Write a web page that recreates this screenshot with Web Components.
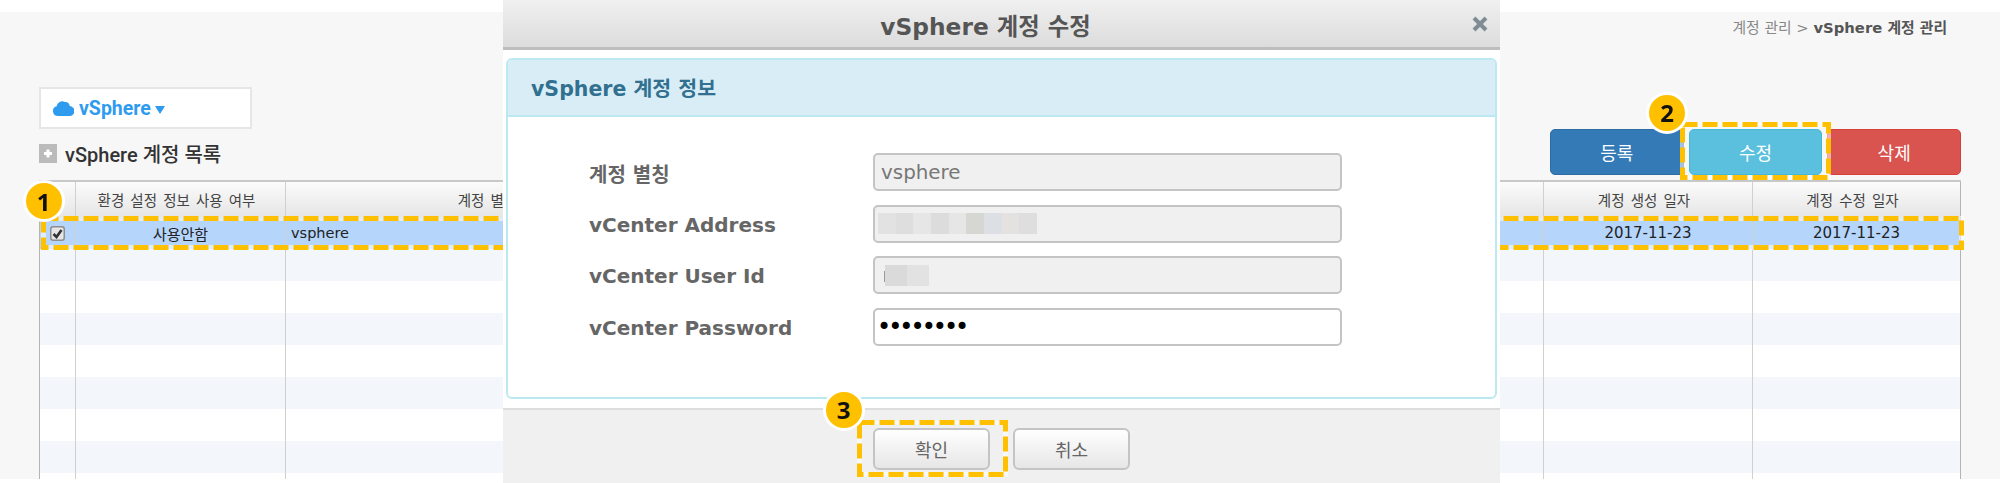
<!DOCTYPE html>
<html lang="ko">
<head>
    <meta charset="UTF-8">
    <title>vSphere 계정 관리</title>
    <style>
        html, body {
            margin: 0;
            height: 483px;
            overflow: hidden;
            background: #fff;
            font-family: "DejaVu Sans", "Noto Sans CJK KR", sans-serif;
        }
    </style>
</head>
<body>
    <account-page>
        <bread-crumb slot="crumb"><span>계정 관리 &gt; </span><b>vSphere 계정 관리</b></bread-crumb>
        <cloud-select slot="left">vSphere</cloud-select>
        <section-title slot="left">vSphere 계정 목록</section-title>
        <action-button slot="right" kind="primary">등록</action-button>
        <action-button slot="right" kind="info">수정</action-button>
        <action-button slot="right" kind="danger">삭제</action-button>
        <data-grid slot="table">
            <grid-row header>
                <grid-cell></grid-cell>
                <grid-cell>환경 설정 정보 사용 여부</grid-cell>
                <grid-cell style="padding-right:0">계정 별칭</grid-cell>
                <grid-cell></grid-cell>
                <grid-cell>계정 생성 일자</grid-cell>
                <grid-cell>계정 수정 일자</grid-cell>
            </grid-row>
            <grid-row selected>
                <grid-cell><check-mark></check-mark></grid-cell>
                <grid-cell>사용안함</grid-cell>
                <grid-cell align="left" style="font-size:14.5px">vsphere</grid-cell>
                <grid-cell></grid-cell>
                <grid-cell>2017-11-23</grid-cell>
                <grid-cell>2017-11-23</grid-cell>
            </grid-row>
        </data-grid>
    </account-page>

    <dash-box x="41" y="216" w="1923" h="34"></dash-box>

    <edit-dialog heading="vSphere 계정 수정">
        <info-panel heading="vSphere 계정 정보">
            <form-field label="계정 별칭" disabled>vsphere</form-field>
            <form-field label="vCenter Address" disabled><mask-blocks shades="#e2e2e2 #dedede #e6e6e6 #dcdcdc #e6e6e6 #d6d6d2 #dce0e4 #e4e2e0 #dedede" width="159"></mask-blocks></form-field>
            <form-field label="vCenter User Id" disabled><mask-blocks shades="#dadada #e2e2e2" width="44" pad="11"></mask-blocks></form-field>
            <form-field label="vCenter Password"><span style="font-size:24px;letter-spacing:-3px;margin-left:-4px;color:#000">••••••••</span></form-field>
        </info-panel>
        <plain-button slot="footer">확인</plain-button>
        <plain-button slot="footer">취소</plain-button>
    </edit-dialog>

    <dash-box x="1680" y="122" w="151" h="58"></dash-box>
    <dash-box x="857" y="420" w="151" h="57"></dash-box>
    <step-badge x="43.5" y="201">1</step-badge>
    <step-badge x="1667" y="112.5">2</step-badge>
    <step-badge x="843.5" y="409.5">3</step-badge>

    <script>
        // Helper so every component only has to give its markup.
        class ShadowEl extends HTMLElement {
            constructor() {
                super();
                this.attachShadow({ mode: 'open' });
            }
            connectedCallback() {
                this.shadowRoot.innerHTML = this.markup();
            }
        }

        class AccountPage extends ShadowEl {
            markup() {
                return `
                <style>
                    :host { display: block; margin-top: 12px; height: 467px; overflow: hidden; background: #f7f7f7; padding: 0 39px; box-sizing: border-box; }
                    .bar { display: flex; align-items: flex-end; justify-content: space-between; height: 163px; margin-bottom: 5px; }
                    .right { display: flex; gap: 5px; width: 411px; }
                    .crumb { height: 0; }
                </style>
                <div class="crumb"><slot name="crumb"></slot></div>
                <div class="bar">
                    <div class="left"><slot name="left"></slot></div>
                    <div class="right"><slot name="right"></slot></div>
                </div>
                <slot name="table"></slot>`;
            }
        }
        customElements.define('account-page', AccountPage);

        class BreadCrumb extends ShadowEl {
            markup() {
                return `
                <style>
                    :host { display: block; text-align: right; padding: 7px 14px 0 0; font-size: 14.8px; line-height: 18px; color: #888; }
                    ::slotted(b) { color: #555; }
                </style>
                <slot></slot>`;
            }
        }
        customElements.define('bread-crumb', BreadCrumb);

        class CloudSelect extends ShadowEl {
            markup() {
                return `
                <style>
                    :host { display: flex; align-items: center; box-sizing: border-box; width: 213px; height: 42px; background: #fff; border: 2px solid #e6e6e6; padding-left: 12px; margin-bottom: 13px;
                        font: bold 19.5px Roboto, "Noto Sans CJK KR", sans-serif; color: #2f9bef; }
                    svg { display: block; }
                    .cloud { margin-right: 5px; }
                    .caret { margin-left: 4px; margin-top: 3px; }
                </style>
                <svg class="cloud" width="21" height="16" viewBox="0 0 21 16"><path fill="#2f9bef" d="M5 16a5 5 0 0 1-1.4-9.8A5.6 5.6 0 0 1 11.8 2a4.6 4.6 0 0 1 4.9 4 5 5 0 0 1-.5 10z"/></svg>
                <slot></slot>
                <svg class="caret" width="10" height="8" viewBox="0 0 10 8"><path fill="#2f9bef" d="M0 0h10L5 8z"/></svg>`;
            }
        }
        customElements.define('cloud-select', CloudSelect);

        class SectionTitle extends ShadowEl {
            markup() {
                return `
                <style>
                    :host { display: flex; align-items: center; height: 22px; margin-bottom: 11px;
                        font: 500 20px Roboto, "Noto Sans CJK KR", sans-serif; color: #333; }
                    svg { display: block; margin-right: 8px; }
                </style>
                <svg width="18" height="19" viewBox="0 0 18 19"><rect width="18" height="19" fill="#bbb"/><path fill="#fff" d="M7.5 5.5h3v2.500h2.500v3h-2.500v2.500h-3v-2.500h-2.500v-3h2.500z"/></svg>
                <slot></slot>`;
            }
        }
        customElements.define('section-title', SectionTitle);

        class ActionButton extends ShadowEl {
            markup() {
                const colours = { primary: ['#337ab7', '#2e6da4'], info: ['#5bc0de', '#46b8da'], danger: ['#d9534f', '#d43f3a'] };
                const [bg, line] = colours[this.getAttribute('kind')];
                return `
                <style>
                    :host { flex: 1; display: flex; align-items: center; justify-content: center; box-sizing: border-box; height: 46px; border-radius: 5px;
                        background: ${bg}; border: 1px solid ${line}; color: #fff; font-size: 18px; }
                </style>
                <slot></slot>`;
            }
        }
        customElements.define('action-button', ActionButton);

        class DataGrid extends ShadowEl {
            markup() {
                let blanks = '';
                for (let i = 0; i < 8; i++) {
                    blanks += `<grid-row ${i % 2 ? '' : 'alt'}>` + '<grid-cell></grid-cell>'.repeat(6) + '</grid-row>';
                }
                return `
                <style>
                    :host { display: block; height: 299px; overflow: hidden; background: #fff; border-top: 2px solid #c8c8c8; box-sizing: border-box;
                        --cols: 36px 210px 404px 854px 209px 209px; }
                </style>
                <slot></slot>
                ${blanks}`;
            }
        }
        customElements.define('data-grid', DataGrid);

        class GridRow extends ShadowEl {
            markup() {
                return `
                <style>
                    :host { display: grid; grid-template-columns: var(--cols); height: 32px; background: #fff; color: #222; font-size: 15px; --cell-pad: 0; }
                    :host([alt]) { background: #f3f6fb; }
                    :host([selected]) { background: #b5d5fb; }
                    :host([header]) { height: 34px; background: linear-gradient(#fbfbfb, #e6e6e6); border-bottom: 1.5px solid #c8c8c8; color: #444; font-size: 14.5px; word-spacing: 1.5px; --cell-pad: 8px; }
                </style>
                <slot></slot>`;
            }
        }
        customElements.define('grid-row', GridRow);

        class GridCell extends ShadowEl {
            markup() {
                return `
                <style>
                    :host { display: flex; align-items: center; justify-content: center; box-sizing: border-box; min-width: 0; white-space: nowrap; border-left: 1.5px solid #d0d0d0; padding-right: var(--cell-pad); }
                    :host(:first-child) { border-left-color: #b4b4b4; padding-right: 0; }
                    :host(:last-child) { border-right: 1.5px solid #b4b4b4; }
                    :host([align=left]) { justify-content: flex-start; padding-left: 5px; }
                </style>
                <slot></slot>`;
            }
        }
        customElements.define('grid-cell', GridCell);

        class CheckMark extends ShadowEl {
            markup() {
                return `
                <style>
                    :host { display: block; width: 15px; height: 15px; }
                    svg { display: block; }
                </style>
                <svg width="15" height="15" viewBox="0 0 15 15"><rect x=".75" y=".75" width="13.500" height="13.500" rx="2.500" fill="#e6e6e6" stroke="#8e8e8e" stroke-width="1.500"/><path d="M3.500 8l3 3 5-7" fill="none" stroke="#333" stroke-width="2.600"/></svg>`;
            }
        }
        customElements.define('check-mark', CheckMark);

        class EditDialog extends ShadowEl {
            markup() {
                return `
                <style>
                    :host { position: fixed; left: 503px; top: 0; width: 997px; height: 483px; display: flex; flex-direction: column; background: #fff; }
                    header { flex: none; box-sizing: content-box; height: 45px; padding: 2px 32px 0 0; border-bottom: 3px solid #bdbdbd; background: linear-gradient(#f0f0f0, #dcdcdc); display: flex; align-items: center; justify-content: center; position: relative;
                        font-weight: bold; font-size: 23.3px; color: #555; }
                    header svg { position: absolute; right: 12px; top: 16px; }
                    main { flex: 1; padding: 8px 3px; }
                    footer { flex: none; box-sizing: border-box; height: 75px; border-top: 2px solid #ddd; background: #f0f0f0; padding-top: 18px; display: flex; justify-content: center; gap: 23px; }
                </style>
                <header>${this.getAttribute('heading')}
                    <svg width="16" height="16" viewBox="0 0 16 16"><path d="M2 2l12 12M14 2L2 14" stroke="#7f8c94" stroke-width="4"/></svg>
                </header>
                <main><slot></slot></main>
                <footer><slot name="footer"></slot></footer>`;
            }
        }
        customElements.define('edit-dialog', EditDialog);

        class InfoPanel extends ShadowEl {
            markup() {
                return `
                <style>
                    :host { display: block; box-sizing: border-box; height: 341px; border: 2px solid #bce8f1; border-radius: 6px; overflow: hidden; }
                    h2 { margin: 0; height: 57px; box-sizing: border-box; border-bottom: 2px solid #bce8f1; background: #d9edf7; color: #31708f; font-size: 20.5px; line-height: 58px; padding-left: 23px; }
                    .body { padding: 36px 0 0 81px; display: flex; flex-direction: column; gap: 13.67px; }
                </style>
                <h2>${this.getAttribute('heading')}</h2>
                <div class="body"><slot></slot></div>`;
            }
        }
        customElements.define('info-panel', InfoPanel);

        class FormField extends ShadowEl {
            markup() {
                return `
                <style>
                    :host { display: flex; align-items: center; height: 38px; }
                    label { width: 284px; flex: none; font-weight: bold; font-size: 20px; color: #666; padding-top: 2px; }
                    .box { box-sizing: border-box; width: 469px; height: 38px; border: 2px solid #c4c4c4; border-radius: 5px; background: #fff; padding-left: 6px; display: flex; align-items: center;
                        font-size: 19.9px; color: #777; }
                    :host([disabled]) .box { background: #f0f0f0; }
                </style>
                <label>${this.getAttribute('label')}</label>
                <div class="box"><slot></slot></div>`;
            }
        }
        customElements.define('form-field', FormField);

        // The blurred out values in the reference.
        class MaskBlocks extends ShadowEl {
            markup() {
                const shades = this.getAttribute('shades').split(' ');
                const cells = shades.map(s => `<i style="background:${s}"></i>`).join('');
                const stub = this.getAttribute('pad') ? '<b></b>' : '';
                return `
                <style>
                    :host { display: flex; height: 21px; width: ${this.getAttribute('width')}px; margin-left: ${stub ? 4 : -3}px; position: relative; }
                    i { flex: 1; }
                    b { position: absolute; left: -1.5px; top: 6px; width: 1.5px; height: 11px; background: #999; }
                </style>
                ${stub}${cells}`;
            }
        }
        customElements.define('mask-blocks', MaskBlocks);

        class PlainButton extends ShadowEl {
            markup() {
                return `
                <style>
                    :host { display: flex; align-items: center; justify-content: center; box-sizing: border-box; width: 117px; height: 42px; border: 2px solid #c4c4c4; border-radius: 6px;
                        background: linear-gradient(#fff, #e6e6e6); color: #666; font-size: 18px; }
                </style>
                <slot></slot>`;
            }
        }
        customElements.define('plain-button', PlainButton);

        // Annotations laid over the screenshot.
        class DashBox extends ShadowEl {
            markup() {
                const w = +this.getAttribute('w'), h = +this.getAttribute('h');
                return `
                <style>
                    :host { position: fixed; left: ${this.getAttribute('x')}px; top: ${this.getAttribute('y')}px; width: ${w}px; height: ${h}px; pointer-events: none; }
                    svg { display: block; }
                </style>
                <svg width="${w}" height="${h}" viewBox="0 0 ${w} ${h}">
                    <rect x="2.500" y="2.500" width="${w - 5}" height="${h - 5}" fill="none" stroke="#fff" stroke-opacity=".55" stroke-width="5"/>
                    <rect x="2.500" y="2.500" width="${w - 5}" height="${h - 5}" fill="none" stroke="#ffc000" stroke-width="5" stroke-dasharray="15 5"/>
                </svg>`;
            }
        }
        customElements.define('dash-box', DashBox);

        class StepBadge extends ShadowEl {
            markup() {
                return `
                <style>
                    :host { position: fixed; left: ${this.getAttribute('x') - 21}px; top: ${this.getAttribute('y') - 21}px; width: 42px; height: 42px; box-sizing: border-box;
                        border: 3px solid #fff; border-radius: 50%; background: #ffc000; display: flex; align-items: center; justify-content: center;
                        font: bold 24px "Noto Sans", sans-serif; color: #111; }
                </style>
                <slot></slot>`;
            }
        }
        customElements.define('step-badge', StepBadge);
    </script>
</body>
</html>
